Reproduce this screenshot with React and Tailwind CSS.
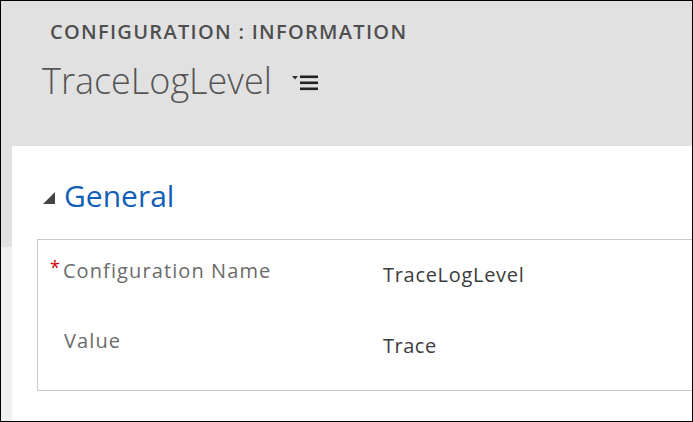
export default function App() {
  const font = { fontFamily: '"Open Sans", "Noto Sans", sans-serif' };
  return (
    <div
      className="w-[693px] h-[422px] border border-black bg-[#e1e1e1] flex flex-col overflow-hidden"
      style={font}
    >
      <div className="h-[145px] shrink-0 pl-[49px] pt-[18px]">
        <div className="text-[20px] font-semibold leading-[26px] text-[#4f4f4f] tracking-[1.3px]">
          CONFIGURATION : INFORMATION
        </div>
        <div className="flex items-center mt-[13px] -ml-[8px]">
          <span className="text-[36px] font-light leading-[46px] text-[#555]">TraceLogLevel</span>
          <svg width="30" height="16" viewBox="0 0 30 16" className="ml-[18px] mt-[3px]">
            <polygon points="2,1 8,1 5,4.5" fill="#333" />
            <rect x="10" y="0.5" width="18" height="2.6" fill="#222" />
            <rect x="10" y="6.5" width="18" height="2.6" fill="#222" />
            <rect x="10" y="12.5" width="18" height="2.6" fill="#222" />
          </svg>
        </div>
      </div>
      <div className="flex flex-1 min-h-0">
        <div className="w-[11px] shrink-0 flex flex-col">
          <div className="h-[101px] bg-[#e1e1e1]" />
          <div className="flex-1 bg-[#f0f0f0]" />
        </div>
        <div className="flex-1 bg-white pt-[30px]">
          <div className="flex items-center pl-[31px]">
            <svg width="12" height="12" viewBox="0 0 12 12" className="mt-[4px]">
              <polygon points="12,0 12,12 0,12" fill="#444" />
            </svg>
            <span className="ml-[9px] text-[30px] leading-[40px] text-[#1160b7]">General</span>
          </div>
          <div className="ml-[25px] mt-[23px] h-[152px] border border-r-0 border-[#c5cacd] pt-[16px]">
            <div className="flex h-[70px]">
              <div className="w-[345px] flex pl-[12px]">
                <span className="text-[#d00000] text-[18px] leading-[22px]">*</span>
                <span className="ml-[3px] text-[20px] leading-[30px] tracking-[1.1px] text-[#6b6b6b]">Configuration Name</span>
              </div>
              <div className="text-[20px] leading-[30px] tracking-[0.7px] text-[#3c3c3c] pt-[4px]">TraceLogLevel</div>
            </div>
            <div className="flex">
              <div className="w-[345px] pl-[26px] text-[20px] leading-[30px] tracking-[1.1px] text-[#6b6b6b]">Value</div>
              <div className="text-[20px] leading-[30px] tracking-[0.5px] text-[#3c3c3c] pt-[5px]">Trace</div>
            </div>
          </div>
        </div>
      </div>
    </div>
  );
}
